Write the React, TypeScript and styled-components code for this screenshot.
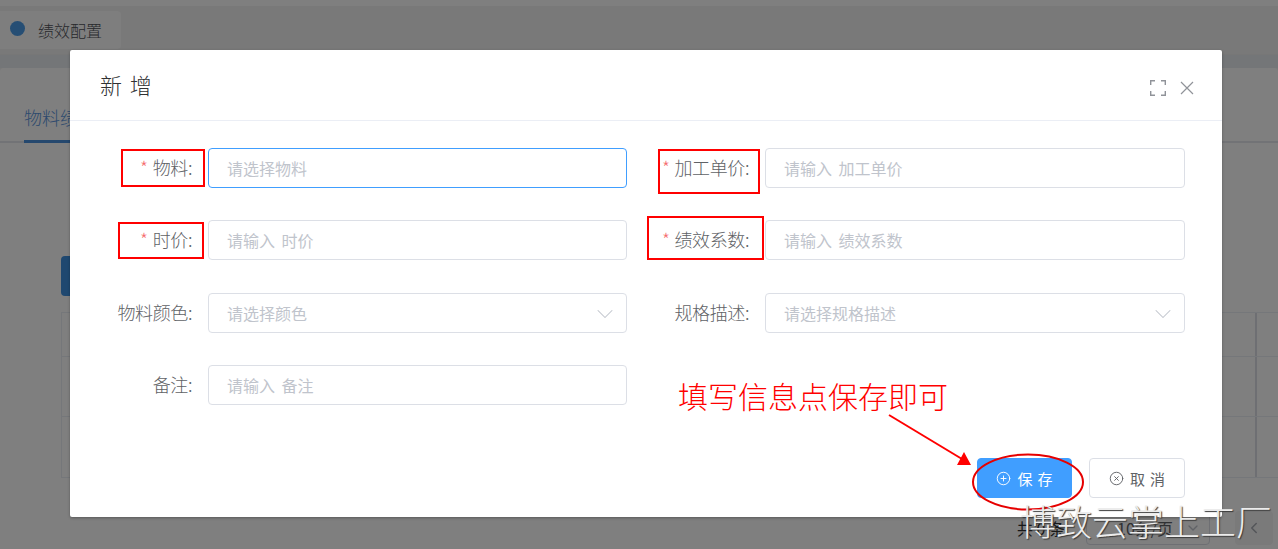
import React from "react";
import styled, { createGlobalStyle } from "styled-components";
import { ChevronDown, ChevronLeft, CirclePlus, CircleX } from "lucide-react";

const GlobalStyle = createGlobalStyle`
  html, body {
    margin: 0;
    padding: 0;
    height: 100%;
    overflow: hidden;
    font-family: "Noto Sans CJK SC", "Liberation Sans", sans-serif;
  }
  * {
    box-sizing: border-box;
  }
`;

const Page = styled.div`
  position: relative;
  width: 1278px;
  height: 549px;
  overflow: hidden;
  display: flex;
  flex-direction: column;
  background: #f2f2f2;
`;

const TopStrip = styled.div`
  height: 6px;
  flex: none;
  background: #ffffff;
`;

const TabBand = styled.div`
  height: 49px;
  flex: none;
  padding-top: 5px;
  background: #f3f3f3;
  border-bottom: 1px solid #efefef;
`;

const PageTab = styled.div`
  width: 121px;
  height: 38px;
  display: flex;
  align-items: center;
  gap: 13px;
  padding-left: 10px;
  background: #fcfcfc;
  border-radius: 0 4px 4px 0;
  color: #4f5259;
  font-size: 16px;
  font-weight: 300;
`;

const TabDot = styled.span`
  width: 15px;
  height: 15px;
  margin-top: -3px;
  border-radius: 50%;
  background: #4c9de8;
`;

const Spacer = styled.div`
  height: 13px;
  flex: none;
  background: #e8ecf0;
`;

const Card = styled.div`
  flex: 1;
  display: flex;
  flex-direction: column;
  background: #ffffff;
  border-radius: 4px 4px 0 0;
`;

const CardTabs = styled.div`
  height: 75px;
  flex: none;
  display: flex;
  align-items: flex-end;
  padding-left: 24px;
  border-bottom: 2px solid #e4e7ed;
`;

const CardTab = styled.div`
  width: 110px;
  height: 39px;
  margin-bottom: -2px;
  border-bottom: 3px solid #4a90dc;
  color: #5a94dc;
  font-size: 18px;
  font-weight: 300;
  line-height: 26px;
  white-space: nowrap;
`;

const AddButton = styled.div`
  width: 96px;
  height: 40px;
  flex: none;
  margin: 113px 0 16px 61px;
  border-radius: 4px;
  background: #3f90e0;
`;

const Table = styled.div`
  width: 1300px;
  flex: none;
  margin-left: 61px;
  border-left: 1px solid #ebeef5;
  border-top: 1px solid #ebeef5;
`;

const TableRow = styled.div<{ $height: number }>`
  height: ${(p) => p.$height}px;
  display: flex;
  padding-left: 1193px;
  border-bottom: 1px solid #ebeef5;
`;

const TableCell = styled.div`
  width: 2px;
  background: #dcdfe6;
`;

const Pagination = styled.div`
  display: flex;
  align-items: center;
  height: 34px;
  margin-top: 33px;
  padding-left: 1017px;
  color: #303133;
  font-size: 16px;
`;

const PageTotal = styled.span`
  width: 69px;
  white-space: nowrap;
`;

const PageSize = styled.div`
  width: 124px;
  height: 34px;
  display: flex;
  align-items: center;
  justify-content: space-between;
  padding: 0 8px 0 30px;
  border: 1px solid #dcdfe6;
  border-radius: 4px;
  color: #606266;
  white-space: nowrap;
  svg {
    color: #c0c4cc;
  }
`;

const PrevButton = styled.div`
  width: 38px;
  height: 34px;
  margin-left: 25px;
  display: flex;
  align-items: center;
  justify-content: center;
  background: #f4f4f5;
  border-radius: 4px;
  color: #a8abb2;
`;

const Overlay = styled.div`
  position: absolute;
  inset: 0;
  background: rgba(0, 0, 0, 0.5);
`;

const Modal = styled.div`
  position: absolute;
  left: 70px;
  top: 50px;
  width: 1152px;
  height: 467px;
  display: flex;
  flex-direction: column;
  background: #ffffff;
  border-radius: 2px;
  box-shadow: 0 1px 3px rgba(0, 0, 0, 0.3);
`;

const ModalHeader = styled.div`
  height: 71px;
  flex: none;
  display: flex;
  align-items: center;
  justify-content: space-between;
  padding: 0 28px 0 30px;
  border-bottom: 1px solid #ebeef5;
`;

const ModalTitle = styled.h2`
  margin: 0 0 2px;
  color: #303133;
  font-size: 22px;
  font-weight: 300;
  word-spacing: 3px;
`;

const HeaderIcons = styled.div`
  display: flex;
  align-items: center;
  gap: 14px;
  margin-top: 5px;
  color: #909399;
`;

const Form = styled.div`
  display: grid;
  grid-template-columns: 519px 520px;
  grid-auto-rows: 40px;
  gap: 32.4px 38px;
  padding: 27px 37px 0 38px;
`;

const Field = styled.div`
  display: flex;
  align-items: center;
`;

const Label = styled.label`
  width: 112px;
  flex: none;
  margin-left: -12px;
  padding-right: 16px;
  margin-top: -2px;
  text-align: right;
  color: #606266;
  font-size: 18px;
  font-weight: 300;
  letter-spacing: -0.4px;
  white-space: nowrap;
`;

const Star = styled.span`
  margin-right: 5px;
  color: #f56c6c;
`;

const InputBox = styled.div<{ $focused?: boolean }>`
  flex: 1;
  height: 40px;
  display: flex;
  align-items: center;
  justify-content: space-between;
  padding: 0 7px 0 18px;
  border: 1px solid ${(p) => (p.$focused ? "#409eff" : "#dcdfe6")};
  border-radius: 4px;
  color: #c0c4cc;
  font-size: 16px;
  font-weight: 400;
  word-spacing: 3px;
  svg {
    margin-top: 2px;
  }
`;

const Footer = styled.div`
  margin-top: auto;
  display: flex;
  justify-content: flex-end;
  gap: 17px;
  padding: 0 37px 19px 0;
`;

const Button = styled.button<{ $primary?: boolean }>`
  width: ${(p) => (p.$primary ? 95 : 96)}px;
  height: 40px;
  display: flex;
  align-items: center;
  justify-content: center;
  gap: 6px;
  padding: 0;
  border: 1px solid ${(p) => (p.$primary ? "#409eff" : "#dcdfe6")};
  border-radius: 4px;
  background: ${(p) => (p.$primary ? "#409eff" : "#ffffff")};
  color: ${(p) => (p.$primary ? "#ffffff" : "#606266")};
  font-family: inherit;
  font-size: 15px;
  font-weight: 400;
  letter-spacing: 5px;
  span {
    margin-right: -5px;
  }
`;

const RedBox = styled.div<{ $x: number; $y: number; $w: number; $h: number }>`
  position: absolute;
  left: ${(p) => p.$x}px;
  top: ${(p) => p.$y}px;
  width: ${(p) => p.$w}px;
  height: ${(p) => p.$h}px;
  border: 2px solid #ff0000;
`;

const Note = styled.div`
  position: absolute;
  left: 678px;
  top: 374px;
  color: #ff0000;
  font-size: 30px;
  font-weight: 300;
  line-height: 42px;
  white-space: nowrap;
`;

const Markup = styled.svg`
  position: absolute;
  inset: 0;
  pointer-events: none;
`;

const Watermark = styled.div`
  position: absolute;
  left: 1020px;
  top: 495px;
  color: #ececec;
  font-size: 36px;
  font-weight: 300;
  line-height: 50px;
  white-space: nowrap;
  text-shadow: 1px 1px 1px #3a3a3a;
`;

const FullscreenIcon = () => (
  <svg width="16" height="16" viewBox="0 0 16 16" fill="none" stroke="currentColor" strokeWidth="1.4">
    <path d="M.7 5V.7H5M11 .7h4.3V5M15.3 11v4.3H11M5 15.3H.7V11" />
  </svg>
);

const CloseIcon = () => (
  <svg width="14" height="14" viewBox="0 0 14 14" fill="none" stroke="currentColor" strokeWidth="1.2">
    <path d="M1 1l12 12M13 1L1 13" />
  </svg>
);

const fields = [
  { label: "物料", placeholder: "请选择物料", required: true, focused: true },
  { label: "加工单价", placeholder: "请输入 加工单价", required: true },
  { label: "时价", placeholder: "请输入 时价", required: true },
  { label: "绩效系数", placeholder: "请输入 绩效系数", required: true },
  { label: "物料颜色", placeholder: "请选择颜色", select: true },
  { label: "规格描述", placeholder: "请选择规格描述", select: true },
  { label: "备注", placeholder: "请输入 备注" },
];

const rowHeights = [44, 60, 61];

const boxes = [
  { x: 121, y: 149, w: 84, h: 38 },
  { x: 118, y: 222, w: 86, h: 37 },
  { x: 658, y: 149, w: 102, h: 45 },
  { x: 647, y: 216, w: 117, h: 44 },
];

export default function App() {
  return (
    <Page>
      <GlobalStyle />
      <TopStrip />
      <TabBand>
        <PageTab>
          <TabDot />
          绩效配置
        </PageTab>
      </TabBand>
      <Spacer />
      <Card>
        <CardTabs>
          <CardTab>物料绩效配置</CardTab>
        </CardTabs>
        <AddButton />
        <Table>
          {rowHeights.map((height) => (
            <TableRow key={height} $height={height}>
              <TableCell />
            </TableRow>
          ))}
        </Table>
        <Pagination>
          <PageTotal>共 0 条</PageTotal>
          <PageSize>
            10条/页
            <ChevronDown size={16} />
          </PageSize>
          <PrevButton>
            <ChevronLeft size={18} />
          </PrevButton>
        </Pagination>
      </Card>
      <Overlay />
      <Modal>
        <ModalHeader>
          <ModalTitle>新 增</ModalTitle>
          <HeaderIcons>
            <FullscreenIcon />
            <CloseIcon />
          </HeaderIcons>
        </ModalHeader>
        <Form>
          {fields.map((field) => (
            <Field key={field.label}>
              <Label>
                {field.required && <Star>*</Star>}
                {field.label}:
              </Label>
              <InputBox $focused={field.focused}>
                {field.placeholder}
                {field.select && <ChevronDown size={28} strokeWidth={0.9} />}
              </InputBox>
            </Field>
          ))}
        </Form>
        <Footer>
          <Button $primary>
            <CirclePlus size={15} strokeWidth={1.5} />
            <span>保存</span>
          </Button>
          <Button>
            <CircleX size={15} strokeWidth={1.5} />
            <span>取消</span>
          </Button>
        </Footer>
      </Modal>
      {boxes.map((box) => (
        <RedBox key={box.x} $x={box.x} $y={box.y} $w={box.w} $h={box.h} />
      ))}
      <Note>填写信息点保存即可</Note>
      <Markup width="1278" height="549" viewBox="0 0 1278 549" fill="none">
        <path d="M889 415L962 459" stroke="#ff0000" strokeWidth="2" />
        <path d="M964 452L971 465H957Z" fill="#ff0000" />
        <ellipse cx="1028" cy="482" rx="55" ry="27.5" stroke="#e60000" strokeWidth="2" />
      </Markup>
      <Watermark>博致云掌上工厂</Watermark>
    </Page>
  );
}
